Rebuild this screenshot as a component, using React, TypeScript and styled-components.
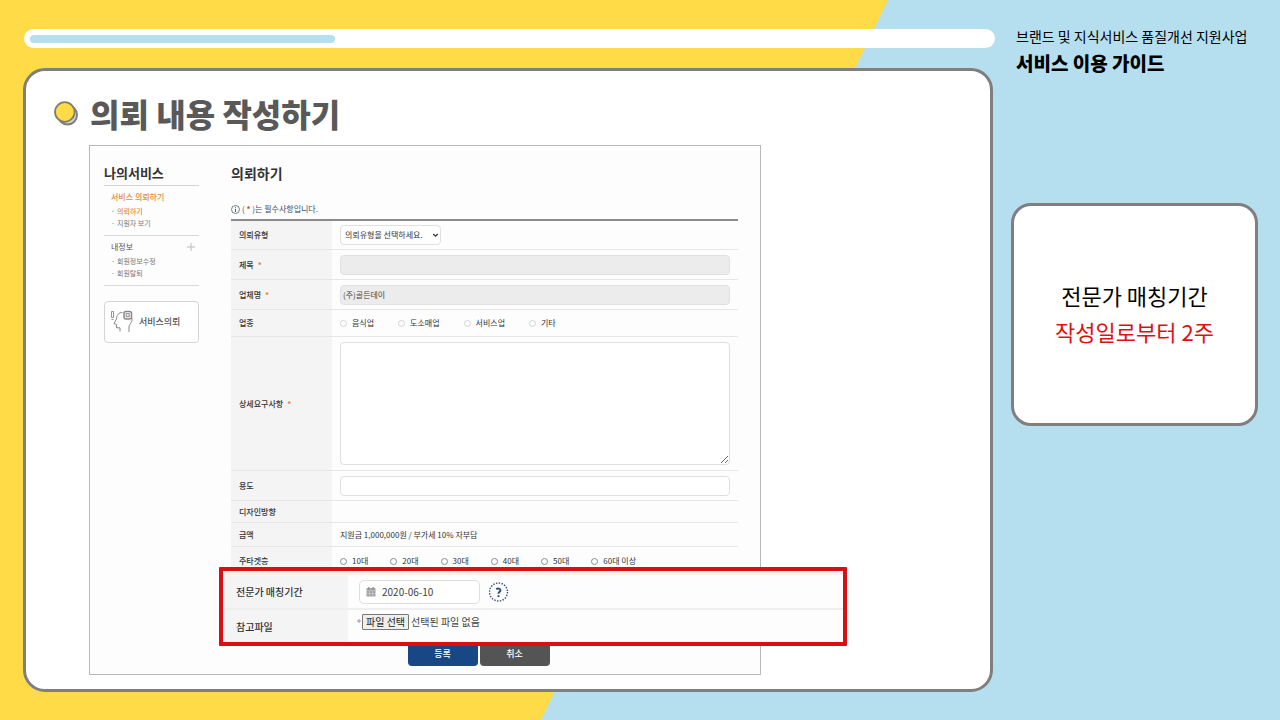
import React, { useId } from 'react';
import styled, { createGlobalStyle } from 'styled-components';

const GlobalStyle = createGlobalStyle`
  *, *::before, *::after { box-sizing: border-box; }
  body {
    margin: 0;
    background: #b5dfef;
    color: #333;
    font-family: "Noto Sans CJK KR", "Noto Sans", sans-serif;
  }
  h1, h2, h3, p, ul { margin: 0; padding: 0; }
  ul { list-style: none; }
  a { color: inherit; text-decoration: none; }
  input, textarea, select, button { font-family: inherit; margin: 0; }
`;

const Page = styled.div`
  position: relative;
  isolation: isolate;
  min-height: 100vh;
  display: grid;
  grid-template-columns: minmax(0, 1fr) 247px;
  column-gap: 18px;
  padding: 29px 22px 28px 23px;
  &::before {
    content: "";
    position: absolute;
    inset: 0;
    z-index: -1;
    background: #ffdb47;
    clip-path: polygon(0 0, calc(50% + 248px) 0, calc(50% - 99px) 100%, 0 100%);
  }
`;

const MainColumn = styled.main`
  display: flex;
  flex-direction: column;
  gap: 20px;
`;

const ProgressTrack = styled.div`
  height: 19px;
  margin: 0 -2px 0 1px;
  padding: 6px;
  border-radius: 10px;
  background: #fff;
`;

const ProgressFill = styled.div`
  height: 8px;
  border-radius: 4px;
  background: #b5dfef;
`;

const Panel = styled.section`
  flex: 1;
  border: 3px solid #7f7f7f;
  border-radius: 22px;
  background: #fff;
  padding: 22px 0 14px;
`;

const PanelHeader = styled.header`
  display: flex;
  align-items: center;
  gap: 11px;
  padding: 0 28px 12px;
`;

const PanelTitle = styled.h1`
  font-size: 32px;
  line-height: 40px;
  font-weight: 900;
  color: #595959;
`;

const Sheet = styled.div`
  display: grid;
  grid-template-columns: 95px minmax(0, 1fr);
  column-gap: 32px;
  margin: 0 229px 0 63px;
  padding: 18px 22px 8px 14px;
  border: 1px solid #b8b8b8;
  background: #fdfdfd;
`;

const SideTitle = styled.h2`
  font-size: 13px;
  line-height: 18px;
  font-weight: 700;
  color: #333;
  padding-bottom: 3px;
  border-bottom: 1px solid #d4d4d4;
`;

const MenuGroup = styled.div`
  padding: 5px 4px 6px 7px;
  border-bottom: 1px solid #d9d9d9;
`;

const MenuHead = styled.div<{ $active?: boolean }>`
  display: flex;
  justify-content: space-between;
  align-items: center;
  font-size: 8px;
  line-height: 12px;
  font-weight: ${(p) => (p.$active ? 500 : 400)};
  color: ${(p) => (p.$active ? '#e08a3c' : '#555')};
  padding-bottom: 2px;
`;

const ExpandButton = styled.button`
  display: flex;
  padding: 0;
  border: 0;
  background: none;
`;

const MenuItem = styled.li<{ $active?: boolean }>`
  display: flex;
  gap: 2px;
  font-size: 7px;
  line-height: 12px;
  font-weight: ${(p) => (p.$active ? 500 : 400)};
  color: ${(p) => (p.$active ? '#e08a3c' : '#777')};
  &::before { content: "·"; }
`;

const RequestButton = styled.button`
  display: flex;
  align-items: center;
  gap: 5px;
  width: 100%;
  height: 42px;
  margin-top: 15px;
  padding: 0 5px;
  border: 1px solid #d4d4d4;
  border-radius: 4px;
  background: #fff;
  font-size: 9px;
  line-height: 12px;
  font-weight: 500;
  color: #555;
`;

const FormTitle = styled.h2`
  font-size: 14px;
  line-height: 18px;
  font-weight: 700;
  color: #333;
`;

const Notice = styled.p`
  display: flex;
  align-items: center;
  gap: 2px;
  margin: 21px 0 4px;
  font-size: 8px;
  line-height: 12px;
  color: #3b4a63;
  em { font-style: normal; font-weight: 700; color: #d2442c; }
`;

const FieldTable = styled.table`
  width: 100%;
  table-layout: fixed;
  border-collapse: separate;
  border-spacing: 0;
  border-top: 2px solid #8c8a8c;
  font-size: 8px;
  line-height: 12px;
`;

const FieldRow = styled.tr<{ $height: number }>`
  height: ${(p) => p.$height}px;
`;

const FieldName = styled.th`
  width: 101px;
  padding: 0 8px;
  border-bottom: 1px solid #e6e6e6;
  background: #f4f4f4;
  text-align: left;
  font-weight: 500;
  color: #333;
`;

const FieldCell = styled.td`
  padding: 0 8px;
  border-bottom: 1px solid #e6e6e6;
`;

const Star = styled.span`
  margin-left: 4px;
  font-weight: 700;
  color: #ee8030;
`;

const SelectBox = styled.div`
  display: grid;
  grid-template-columns: minmax(0, 1fr) 8px;
  align-items: center;
  width: 101px;
  height: 20px;
  border: 1px solid #e0e0e0;
  border-radius: 4px;
  background: #fff;
  svg { grid-area: 1 / 2; pointer-events: none; }
`;

const TypeSelect = styled.select`
  grid-area: 1 / 1 / 2 / 3;
  appearance: none;
  padding: 0 4px;
  border: 0;
  background: none;
  font-size: 8px;
  line-height: 12px;
  color: #333;
`;

const TextField = styled.input`
  display: block;
  width: 100%;
  height: 20px;
  padding: 0 2px;
  border: 1px solid #e0e0e0;
  border-radius: 4px;
  background: #fff;
  font-size: 8px;
  color: #444;
  &:read-only { background: #ececec; }
`;

const DetailArea = styled.textarea`
  display: block;
  width: 100%;
  height: 123px;
  border: 1px solid #dedede;
  border-radius: 4px;
  background: #fff;
`;

const Choices = styled.div<{ $gap: number }>`
  display: flex;
  gap: ${(p) => p.$gap}px;
`;

const Choice = styled.label<{ $line: string }>`
  display: flex;
  align-items: center;
  gap: 5px;
  white-space: nowrap;
  input {
    appearance: none;
    width: 7px;
    height: 7px;
    margin-top: 1px;
    border: 1px solid ${(p) => p.$line};
    border-radius: 50%;
    background: #fff;
  }
`;

const Callout = styled.div`
  position: relative;
  z-index: 1;
  margin: -8px -109px 0 -12px;
  padding-top: 4px;
  border: 4px solid #db0f12;
  border-radius: 1px;
  background: #f9f1f1;
`;

const CalloutTable = styled.table`
  width: 100%;
  table-layout: fixed;
  border-collapse: separate;
  border-spacing: 0;
  background: #fdfdfd;
  font-size: 10px;
  line-height: 14px;
  tr + tr th, tr + tr td { border-top: 2px solid #efefef; }
`;

const CalloutName = styled.th`
  width: 125px;
  padding: 1px 13px 0;
  background: #f4f4f4;
  text-align: left;
  font-weight: 500;
  color: #333;
`;

const CalloutCell = styled.td`
  padding: 0 11px;
`;

const Inline = styled.div<{ $gap: number }>`
  display: flex;
  align-items: center;
  gap: ${(p) => p.$gap}px;
`;

const DateBox = styled.label`
  display: flex;
  align-items: center;
  gap: 6px;
  width: 121px;
  height: 24px;
  padding: 0 6px;
  border: 1px solid #dedede;
  border-radius: 5px;
  background: #fff;
  input {
    flex: 1;
    min-width: 0;
    padding: 0;
    border: 0;
    background: none;
    font-size: 10px;
    line-height: 14px;
    color: #444;
  }
`;

const HelpButton = styled.button`
  display: flex;
  padding: 0;
  border: 0;
  background: none;
`;

const FileLine = styled.div`
  display: flex;
  align-items: center;
  gap: 1px;
  margin-left: -2px;
  padding-bottom: 8px;
  color: #444;
`;

const FileLabel = styled.label`
  display: flex;
  padding: 0 3px;
  margin-right: 1px;
  border: 1px solid #777;
  border-radius: 1px;
  background: #efefef;
  color: #222;
  input { width: 0; height: 0; opacity: 0; padding: 0; }
`;

const Actions = styled.div`
  display: flex;
  justify-content: center;
  gap: 2px;
  margin-top: -4px;
  padding-right: 12px;
`;

const ActionButton = styled.button<{ $tone: string }>`
  width: 70px;
  height: 24px;
  padding: 0;
  border: 0;
  border-radius: 4px;
  background: ${(p) => p.$tone};
  color: #fff;
  font-size: 9px;
  line-height: 14px;
  font-weight: 500;
`;

const Aside = styled.aside`
  display: flex;
  flex-direction: column;
`;

const GuideTitle = styled.header`
  height: 174px;
  padding: 0 0 0 5px;
  color: #000;
  white-space: nowrap;
  p { font-size: 14px; line-height: 14px; }
  h2 { font-size: 19px; line-height: 24px; font-weight: 900; margin-top: 8px; }
`;

const NoteCard = styled.section`
  display: flex;
  flex-direction: column;
  justify-content: center;
  height: 223px;
  padding-bottom: 4px;
  border: 3px solid #7f7f7f;
  border-radius: 20px;
  background: #fff;
  text-align: center;
  font-size: 22px;
  line-height: 36px;
  color: #000;
  strong { font-weight: 400; color: #dd1111; }
`;

const Bullet = () => (
  <svg width="25" height="26" viewBox="0 0 25 26" aria-hidden="true">
    <circle cx="13.500" cy="15" r="9.500" fill="#d9d9d9" stroke="#7f7f7f" strokeWidth="2" />
    <circle cx="10.800" cy="12" r="9.800" fill="#ffdb47" stroke="#7f7f6a" strokeWidth="1.800" />
  </svg>
);

const PlusIcon = () => (
  <svg width="8" height="8" viewBox="0 0 8 8" aria-hidden="true">
    <path d="M4 0v8M0 4h8" stroke="#bbb" fill="none" />
  </svg>
);

const ChevronIcon = () => (
  <svg width="7" height="6" viewBox="0 0 7 6" fill="none" stroke="#333" aria-hidden="true">
    <path d="M1.200 2l2.300 2.200L5.800 2" strokeWidth="1.300" />
  </svg>
);

const HeadIcon = () => (
  <svg width="24" height="26" viewBox="0 0 24 26" fill="none" stroke="#888" aria-hidden="true">
    <path d="M1.500 2.500h2v6h-2zM1.500 10.500h2" strokeWidth="0.900" />
    <path d="M12.500 3.500c-4 0-6 3-6 6.500L4 14.500l2.500 1v3.300h3.500v3.700M22 9c1 4-3 6-3 9v5" />
    <rect x="14" y="2.500" width="7.500" height="7.500" rx="2" strokeWidth="1.500" />
    <rect x="16.200" y="4.700" width="3" height="3" />
  </svg>
);

const InfoIcon = () => (
  <svg width="9" height="9" viewBox="0 0 9 9" fill="none" stroke="#3b4a63" aria-hidden="true">
    <circle cx="4.500" cy="4.500" r="4" strokeWidth="0.700" />
    <path d="M4.500 4v3M4.500 2.200v1" strokeWidth="0.900" />
  </svg>
);

const CalendarIcon = () => (
  <svg width="10" height="10" viewBox="0 0 10 10" fill="none" aria-hidden="true">
    <rect x="0.500" y="1" width="9" height="8.500" rx="0.600" fill="#a3a3a3" />
    <path d="M2.800 0v2.500M7.200 0v2.500" stroke="#8a8a8a" strokeWidth="1.200" />
    <path d="M1 3.600h8M1 6.500h8M3.500 4v5M6.500 4v5" stroke="#d2d2d2" strokeWidth="0.600" />
  </svg>
);

const HelpIcon = () => (
  <svg width="20" height="20" viewBox="0 0 20 20" fill="none" stroke="#2b4a80" aria-hidden="true">
    <circle cx="9.500" cy="10" r="9" strokeWidth="1.400" strokeDasharray="1.400 1.427" />
    <path d="M7.300 7.200c1.600-1.200 4.200-.7 4.200 1.100 0 1.500-2 1.600-2 3.400M9.500 13.200v1.800" strokeWidth="1.900" />
  </svg>
);

const industries = ['음식업', '도소매업', '서비스업', '기타'];
const ages = ['10대', '20대', '30대', '40대', '50대', '60대 이상'];

interface FieldProps {
  name: string;
  height: number;
  required?: boolean;
  htmlFor?: string;
  children?: React.ReactNode;
}

function Field({ name, height, required, htmlFor, children }: FieldProps) {
  return (
    <FieldRow $height={height}>
      <FieldName scope="row">
        {htmlFor ? <label htmlFor={htmlFor}>{name}</label> : name}
        {required && <Star>*</Star>}
      </FieldName>
      <FieldCell>{children}</FieldCell>
    </FieldRow>
  );
}

function RadioSet({ options, gap, line }: { options: string[]; gap: number; line: string }) {
  const group = useId();
  return (
    <Choices $gap={gap}>
      {options.map((option) => (
        <Choice key={option} $line={line}>
          <input type="radio" name={group} />
          {option}
        </Choice>
      ))}
    </Choices>
  );
}

export default function App() {
  const step = 7;
  const steps = 22;
  return (
    <>
      <GlobalStyle />
      <Page>
        <MainColumn>
          <ProgressTrack role="progressbar" aria-valuenow={step} aria-valuemax={steps}>
            <ProgressFill style={{ width: `${(step / steps) * 100}%` }} />
          </ProgressTrack>
          <Panel>
            <PanelHeader>
              <Bullet />
              <PanelTitle>의뢰 내용 작성하기</PanelTitle>
            </PanelHeader>
            <Sheet>
              <nav>
                <SideTitle>나의서비스</SideTitle>
                <MenuGroup>
                  <MenuHead $active><a href="#request">서비스 의뢰하기</a></MenuHead>
                  <ul>
                    <MenuItem $active><a href="#request">의뢰하기</a></MenuItem>
                    <MenuItem><a href="#applicants">지원자 보기</a></MenuItem>
                  </ul>
                </MenuGroup>
                <MenuGroup>
                  <MenuHead>
                    <a href="#me">내정보</a>
                    <ExpandButton type="button" aria-label="내정보 펼치기"><PlusIcon /></ExpandButton>
                  </MenuHead>
                  <ul>
                    <MenuItem><a href="#edit">회원정보수정</a></MenuItem>
                    <MenuItem><a href="#leave">회원탈퇴</a></MenuItem>
                  </ul>
                </MenuGroup>
                <RequestButton type="button"><HeadIcon />서비스의뢰</RequestButton>
              </nav>
              <form>
                <FormTitle>의뢰하기</FormTitle>
                <Notice><InfoIcon /><span>( <em>*</em> )는 필수사항입니다.</span></Notice>
                <FieldTable>
                  <tbody>
                    <Field name="의뢰유형" height={29} htmlFor="type">
                      <SelectBox>
                        <TypeSelect id="type"><option>의뢰유형을 선택하세요.</option></TypeSelect>
                        <ChevronIcon />
                      </SelectBox>
                    </Field>
                    <Field name="제목" height={30} required htmlFor="subject">
                      <TextField id="subject" readOnly />
                    </Field>
                    <Field name="업체명" height={30} required htmlFor="company">
                      <TextField id="company" readOnly defaultValue="(주)골든데이" />
                    </Field>
                    <Field name="업종" height={27}>
                      <RadioSet options={industries} gap={24} line="#d4d4d4" />
                    </Field>
                    <Field name="상세요구사항" height={134} required htmlFor="detail">
                      <DetailArea id="detail" />
                    </Field>
                    <Field name="용도" height={30} htmlFor="usage">
                      <TextField id="usage" />
                    </Field>
                    <Field name="디자인방향" height={22} />
                    <Field name="금액" height={24}>지원금 1,000,000원 / 부가세 10% 자부담</Field>
                    <Field name="주타겟층" height={28}>
                      <RadioSet options={ages} gap={22} line="#8a8a8a" />
                    </Field>
                  </tbody>
                </FieldTable>
                <Callout>
                  <CalloutTable>
                    <tbody>
                      <FieldRow $height={33}>
                        <CalloutName scope="row"><label htmlFor="period">전문가 매칭기간</label></CalloutName>
                        <CalloutCell>
                          <Inline $gap={9}>
                            <DateBox>
                              <CalendarIcon />
                              <input id="period" type="text" defaultValue="2020-06-10" />
                            </DateBox>
                            <HelpButton type="button" aria-label="도움말"><HelpIcon /></HelpButton>
                          </Inline>
                        </CalloutCell>
                      </FieldRow>
                      <FieldRow $height={34}>
                        <CalloutName scope="row">참고파일</CalloutName>
                        <CalloutCell>
                          <FileLine>
                            <svg width="4" height="12" viewBox="0 0 4 12" aria-hidden="true">
                              <circle cx="2" cy="5" r="1.200" fill="none" stroke="#888" strokeWidth="0.900" />
                            </svg>
                            <FileLabel>파일 선택<input type="file" /></FileLabel>
                            <span>선택된 파일 없음</span>
                          </FileLine>
                        </CalloutCell>
                      </FieldRow>
                    </tbody>
                  </CalloutTable>
                </Callout>
                <Actions>
                  <ActionButton type="submit" $tone="#184785">등록</ActionButton>
                  <ActionButton type="button" $tone="#545454">취소</ActionButton>
                </Actions>
              </form>
            </Sheet>
          </Panel>
        </MainColumn>
        <Aside>
          <GuideTitle>
            <p>브랜드 및 지식서비스 품질개선 지원사업</p>
            <h2>서비스 이용 가이드</h2>
          </GuideTitle>
          <NoteCard>
            <p>전문가 매칭기간</p>
            <p><strong>작성일로부터 2주</strong></p>
          </NoteCard>
        </Aside>
      </Page>
    </>
  );
}
